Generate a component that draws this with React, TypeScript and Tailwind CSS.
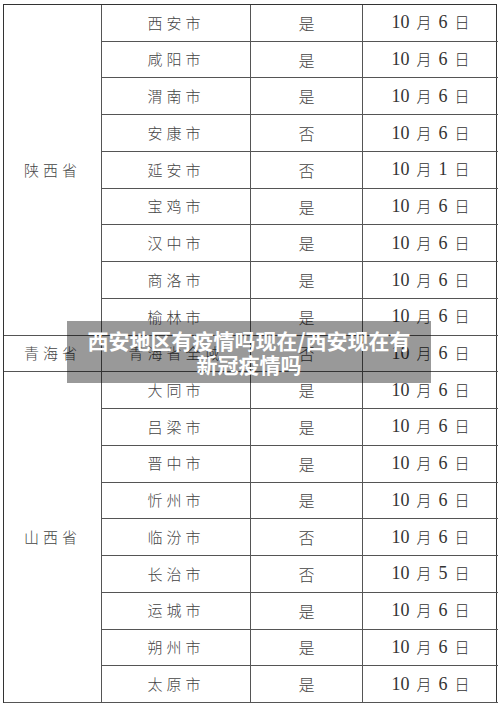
import type { ReactNode } from 'react'

type Row = { city: string; flag: string; day: string }

const groups: { province: string; rows: Row[] }[] = [
  {
    province: '陕西省',
    rows: [
      { city: '西安市', flag: '是', day: '6' },
      { city: '咸阳市', flag: '是', day: '6' },
      { city: '渭南市', flag: '是', day: '6' },
      { city: '安康市', flag: '否', day: '6' },
      { city: '延安市', flag: '否', day: '1' },
      { city: '宝鸡市', flag: '是', day: '6' },
      { city: '汉中市', flag: '是', day: '6' },
      { city: '商洛市', flag: '是', day: '6' },
      { city: '榆林市', flag: '是', day: '6' },
    ],
  },
  {
    province: '青海省',
    rows: [{ city: '青海省全域', flag: '否', day: '6' }],
  },
  {
    province: '山西省',
    rows: [
      { city: '大同市', flag: '是', day: '6' },
      { city: '吕梁市', flag: '是', day: '6' },
      { city: '晋中市', flag: '是', day: '6' },
      { city: '忻州市', flag: '是', day: '6' },
      { city: '临汾市', flag: '否', day: '6' },
      { city: '长治市', flag: '否', day: '5' },
      { city: '运城市', flag: '是', day: '6' },
      { city: '朔州市', flag: '是', day: '6' },
      { city: '太原市', flag: '是', day: '6' },
    ],
  },
]

const cjk = "font-['Noto_Sans_CJK_SC',sans-serif]"

function DateText({ day }: { day: string }) {
  return (
    <span className="flex items-baseline gap-[7px] text-[#333]">
      <span className="font-['Liberation_Serif',serif] text-[18px]">10</span>
      <span className={`${cjk} text-[15px] font-light`}>月</span>
      <span className="font-['Liberation_Serif',serif] text-[18px]">{day}</span>
      <span className={`${cjk} text-[15px] font-light`}>日</span>
    </span>
  )
}

function Cell({ col, row, span = 1, className, children }: { col: number; row: number; span?: number; className: string; children: ReactNode }) {
  return (
    <div
      className={`flex items-center justify-center border-b-[1.5px] border-[#555] ${className}`}
      style={{ gridColumn: col, gridRow: `${row} / span ${span}` }}
    >
      {children}
    </div>
  )
}

export default function App() {
  let rowStart = 1
  return (
    <div className="relative h-[705px] w-[500px] overflow-hidden bg-white">
      <div className="ml-[3px] pt-[4px]">
        <div className="grid h-[699px] w-[494px] grid-cols-[98px_149px_112px_135px] grid-rows-[repeat(19,minmax(0,1fr))] border-l-[1.5px] border-t-[1.5px] border-r-[1.5px] border-[#333]">
          {groups.map((g) => {
            const start = rowStart
            rowStart += g.rows.length
            return [
              <Cell
                key={g.province}
                col={1}
                row={start}
                span={g.rows.length}
                className={`border-r-[1.5px] ${cjk} text-[15px] font-light tracking-[4px] text-[#444]`}
              >
                {g.province}
              </Cell>,
              ...g.rows.map((r, i) => (
                <div key={g.province + r.city} className="contents">
                  <Cell col={2} row={start + i} className={`border-r-[1.5px] ${cjk} text-[15px] font-light tracking-[4px] text-[#444]`}>
                    {r.city}
                  </Cell>
                  <Cell col={3} row={start + i} className={`border-r-[1.5px] ${cjk} text-[16px] font-light text-[#444]`}>
                    {r.flag}
                  </Cell>
                  <Cell col={4} row={start + i} className="border-[#333]">
                    <DateText day={r.day} />
                  </Cell>
                </div>
              )),
            ]
          })}
        </div>
      </div>

      {/* 标题遮罩 */}
      <div className="absolute left-[67px] top-[321px] flex h-[62px] w-[364px] flex-col items-center justify-center bg-black/40">
        <p className={`${cjk} text-center text-[21px] font-bold leading-[24px] text-white`}>
          西安地区有疫情吗现在/西安现在有
          <br />
          新冠疫情吗
        </p>
      </div>
    </div>
  )
}
